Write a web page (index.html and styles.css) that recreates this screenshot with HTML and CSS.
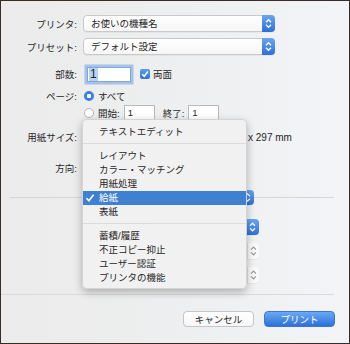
FILE: index.html
```html
<!DOCTYPE html>
<html lang="ja">
<head>
    <meta charset="UTF-8">
    <meta name="viewport" content="width=device-width, initial-scale=1.0">
    <title>プリント</title>
    <link rel="stylesheet" href="styles.css">
</head>
<body>
<div class="dialog">
    <div class="form">
        <div class="row r1">
            <span class="label">プリンタ:</span>
            <div class="popup wide">
                <span class="popup-text">お使いの機種名</span>
                <span class="stepper blue"><svg width="13" height="17" viewBox="0 0 13 17"><path d="M4 7.2 L6.5 4.7 L9 7.2 M4 9.8 L6.5 12.3 L9 9.8" fill="none" stroke="#fff" stroke-width="1.3"/></svg></span>
            </div>
        </div>
        <div class="row r2">
            <span class="label">プリセット:</span>
            <div class="popup wide">
                <span class="popup-text">デフォルト設定</span>
                <span class="stepper blue"><svg width="13" height="17" viewBox="0 0 13 17"><path d="M4 7.2 L6.5 4.7 L9 7.2 M4 9.8 L6.5 12.3 L9 9.8" fill="none" stroke="#fff" stroke-width="1.3"/></svg></span>
            </div>
        </div>
        <div class="row r3">
            <span class="label">部数:</span>
            <div class="field copies focused"><span class="sel">1</span></div>
            <span class="checkbox"><svg width="10" height="10" viewBox="0 0 10 10"><path d="M2.2 5.2 L4.2 7.2 L7.9 2.6" fill="none" stroke="#fff" stroke-width="1.6"/></svg></span>
            <span class="text">両面</span>
        </div>
        <div class="row r4">
            <span class="label">ページ:</span>
            <span class="radio on"></span>
            <span class="text">すべて</span>
        </div>
        <div class="row r5">
            <span class="label"></span>
            <span class="radio"></span>
            <span class="text">開始:</span>
            <div class="field page">1</div>
            <span class="text to">終了:</span>
            <div class="field page">1</div>
        </div>
        <div class="row r6">
            <span class="label">用紙サイズ:</span>
            <span class="size">x 297 mm</span>
        </div>
        <div class="row r7">
            <span class="label">方向:</span>
        </div>
    </div>

    <div class="pane-head">
        <div class="popup pane-popup">
            <span class="popup-text"></span>
            <span class="stepper blue"><svg width="13" height="15" viewBox="0 0 13 15"><path d="M4 6.3 L6.5 3.8 L9 6.3 M4 8.7 L6.5 11.2 L9 8.7" fill="none" stroke="#fff" stroke-width="1.3"/></svg></span>
        </div>
    </div>

    <div class="pane">
        <div class="popup pane-row">
            <span class="popup-text"></span>
            <span class="stepper blue"><svg width="13" height="16" viewBox="0 0 13 16"><path d="M4 6.7 L6.5 4.2 L9 6.7 M4 9.3 L6.5 11.8 L9 9.3" fill="none" stroke="#fff" stroke-width="1.3"/></svg></span>
        </div>
        <div class="popup pane-row dim">
            <span class="popup-text"></span>
            <span class="stepper gray"><svg width="11" height="16" viewBox="0 0 11 16"><path d="M3 6.7 L5.5 4.2 L8 6.7 M3 9.3 L5.5 11.8 L8 9.3" fill="none" stroke="#9a9a9a" stroke-width="1.2"/></svg></span>
        </div>
        <div class="popup pane-row dim">
            <span class="popup-text"></span>
            <span class="stepper gray"><svg width="11" height="16" viewBox="0 0 11 16"><path d="M3 6.7 L5.5 4.2 L8 6.7 M3 9.3 L5.5 11.8 L8 9.3" fill="none" stroke="#9a9a9a" stroke-width="1.2"/></svg></span>
        </div>
    </div>

    <div class="sep-bottom"></div>

    <div class="buttons">
        <button class="btn">キャンセル</button>
        <button class="btn primary">プリント</button>
    </div>

    <!-- open popup menu, drawn over the panel -->
    <div class="menu">
        <div class="item">テキストエディット</div>
        <div class="menu-sep"></div>
        <div class="item">レイアウト</div>
        <div class="item">カラー・マッチング</div>
        <div class="item">用紙処理</div>
        <div class="item selected">
            <svg class="check" width="10" height="10" viewBox="0 0 10 10"><path d="M1.5 5.3 L3.9 7.8 L8.6 1.8" fill="none" stroke="#fff" stroke-width="1.6"/></svg>給紙
        </div>
        <div class="item">表紙</div>
        <div class="menu-sep"></div>
        <div class="item">蓄積/履歴</div>
        <div class="item">不正コピー抑止</div>
        <div class="item">ユーザー認証</div>
        <div class="item">プリンタの機能</div>
    </div>
</div>
</body>
</html>
```

FILE: styles.css
```css
body {
    margin: 0;
    font-family: "Liberation Sans", "Noto Sans CJK JP", sans-serif;
    font-size: 9.5px;
    color: #262626;
}
.dialog {
    position: relative;
    width: 350px;
    height: 344px;
    box-sizing: border-box;
    border: 1px solid #3a2c24;
    background: linear-gradient(to right, #ebebeb 0%, #eeeff0 55%, #f2f4f7 100%);
    overflow: hidden;
}
.form {
    padding-top: 14px;
}
.row {
    display: flex;
    align-items: center;
}
.label {
    width: 79px;
    flex: none;
    text-align: right;
    padding-right: 3px;
    box-sizing: border-box;
}
.r1 { height: 17px; }
.r2 { height: 17px; margin-top: 6px; }
.r3 { height: 20px; margin-top: 9px; }
.r4 { height: 16px; margin-top: 4px; }
.r5 { height: 17px; }
.r6 { height: 16px; margin-top: 8px; }
.r7 { height: 32px; margin-top: 7px; }

.popup {
    display: flex;
    align-items: stretch;
    height: 17px;
    box-sizing: border-box;
    border: 1px solid #c9c9c9;
    border-radius: 4px;
    background: linear-gradient(#ffffff, #f6f6f6);
    box-shadow: 0 1px 0 rgba(0,0,0,0.04);
}
.popup.wide {
    width: 192px;
    margin-left: 3px;
}
.popup-text {
    flex: 1;
    padding-left: 7px;
    line-height: 15px;
}
.stepper {
    width: 13px;
    margin: -1px -1px -1px 0;
    border-radius: 0 4px 4px 0;
    display: flex;
    align-items: center;
    justify-content: center;
}
.stepper.blue {
    background: linear-gradient(#68a6f3, #2f6fd6);
}
.stepper.gray {
    width: 11px;
    background: #fafafa;
    border-left: 1px solid #e0e0e0;
}

.field {
    height: 15px;
    box-sizing: border-box;
    background: #fff;
    border: 1px solid #b9b9b9;
    line-height: 13px;
    padding-left: 1px;
}
.field.copies {
    width: 44px;
    margin-left: 7px;
    padding-left: 0;
}
.focused {
    border-color: #7ea6df;
    box-shadow: 0 0 0 2.5px rgba(120, 165, 230, 0.6);
}
.sel {
    display: inline-block;
    background: #b5d3f8;
    padding: 0 1px;
    margin-left: 1px;
    font-size: 12px;
    line-height: 13px;
}
.field.page {
    width: 31px;
    margin-left: 4px;
    padding-left: 3px;
}
.checkbox {
    width: 10px;
    height: 10px;
    margin-left: 9px;
    border-radius: 2px;
    background: linear-gradient(#5a9cf2, #2f73da);
    display: flex;
}
.text {
    margin-left: 3px;
}
.text.to {
    margin-left: 8px;
}
.radio {
    width: 10px;
    height: 10px;
    margin-left: 4px;
    box-sizing: border-box;
    border-radius: 50%;
    border: 1px solid #b5b5b5;
    background: #fff;
}
.radio.on {
    border: none;
    background: radial-gradient(circle, #fff 0 2px, #3a7fe0 2.5px);
}
.r4 .text,
.r5 .radio + .text {
    margin-left: 4px;
}
.size {
    margin-left: 168px;
    font-size: 10px;
}

.pane-head {
    position: relative;
    height: 15px;
    margin-top: 6px;
    display: flex;
    justify-content: flex-end;
    padding-right: 95px;
}
.pane-head::before {
    content: "";
    position: absolute;
    left: 9px;
    right: 15px;
    top: 7px;
    border-top: 1px solid #d6d6d6;
}
.pane-popup {
    position: relative;
    width: 150px;
    height: 15px;
}
.pane {
    display: flex;
    flex-direction: column;
    align-items: flex-end;
    padding-right: 90px;
}
.pane-row {
    width: 110px;
    height: 16px;
    margin-top: 8px;
}
.pane-row:first-child {
    margin-top: 14px;
}
.pane-row.dim {
    background: #f6f6f6;
    border-color: #d8d8d8;
}
.sep-bottom {
    margin: 11px 15px 0 0;
    border-top: 1px solid #dadada;
}
.buttons {
    display: flex;
    justify-content: flex-end;
    gap: 10px;
    margin-top: 16px;
    padding-right: 14px;
}
.btn {
    width: 71px;
    height: 16px;
    padding: 0;
    font-family: inherit;
    font-size: 9.5px;
    color: #262626;
    border: 1px solid #c5c5c5;
    border-radius: 4px;
    background: linear-gradient(#ffffff, #f7f7f7);
}
.btn.primary {
    color: #fff;
    border-color: #3a76d4;
    background: linear-gradient(#6aa9f4, #2f6fd7);
}

.menu {
    position: absolute;
    left: 81px;
    top: 118px;
    width: 165px;
    height: 170px;
    box-sizing: border-box;
    padding-top: 5px;
    border-radius: 5px;
    background: rgba(241, 241, 241, 0.98);
    border: 1px solid rgba(0,0,0,0.12);
    box-shadow: 0 3px 8px rgba(0,0,0,0.28);
}
.item {
    position: relative;
    height: 14px;
    line-height: 14px;
    padding-left: 16px;
}
.item.selected {
    background: #3f80d1;
    color: #fff;
}
.check {
    position: absolute;
    left: 2px;
    top: 2px;
}
.menu-sep {
    height: 1px;
    background: #dcdcdc;
    margin: 4px 0 5px;
}
.menu-sep:nth-of-type(7) {
    margin: 5px 0 5px;
}
```
